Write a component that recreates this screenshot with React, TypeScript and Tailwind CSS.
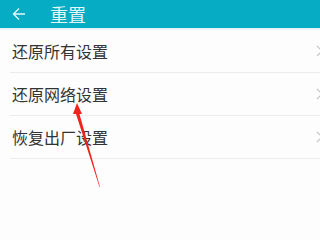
import React from "react";

const items = ["还原所有设置", "还原网络设置", "恢复出厂设置"];

function Chevron() {
  return (
    <svg width="7" height="12" viewBox="0 0 7 12" className="shrink-0">
      <path d="M1 1 L6 6 L1 11" fill="none" stroke="#c4c4c4" strokeWidth="1.2" />
    </svg>
  );
}

export default function App() {
  return (
    <div
      className="relative w-[320px] h-[240px] overflow-hidden bg-[#fdfdfd]"
      style={{ fontFamily: '"Noto Sans CJK SC", "Noto Sans", sans-serif' }}
    >
      <div className="h-[28px] bg-[#05acc4] flex items-center">
        <svg width="14" height="14" viewBox="0 0 14 14" className="ml-[12px]">
          <path d="M13 7 H1.5 M7 1.5 L1.5 7 L7 12.5" fill="none" stroke="#e6f7fa" strokeWidth="1.3" />
        </svg>
        <span className="ml-[24px] text-[18px] leading-none text-[#e4f6f9]">重置</span>
      </div>
      <div className="h-[2px] bg-[#e6f6f8]" />
      <div className="flex flex-col">
        {items.map((t) => (
          <div key={t} className="ml-[10px] h-[43px] flex items-center justify-between border-b border-[#ececec]">
            <span className="pl-[2px] text-[16px] leading-none text-[#333]">{t}</span>
            <div className="mr-[-3px]">
              <Chevron />
            </div>
          </div>
        ))}
      </div>
      <svg className="absolute left-0 top-0" width="320" height="240" viewBox="0 0 320 240">
        <polygon points="77,103 82,114 79.5,114 100,187 99.5,187 76,114 73,114" fill="#f0241c" />
      </svg>
    </div>
  );
}
